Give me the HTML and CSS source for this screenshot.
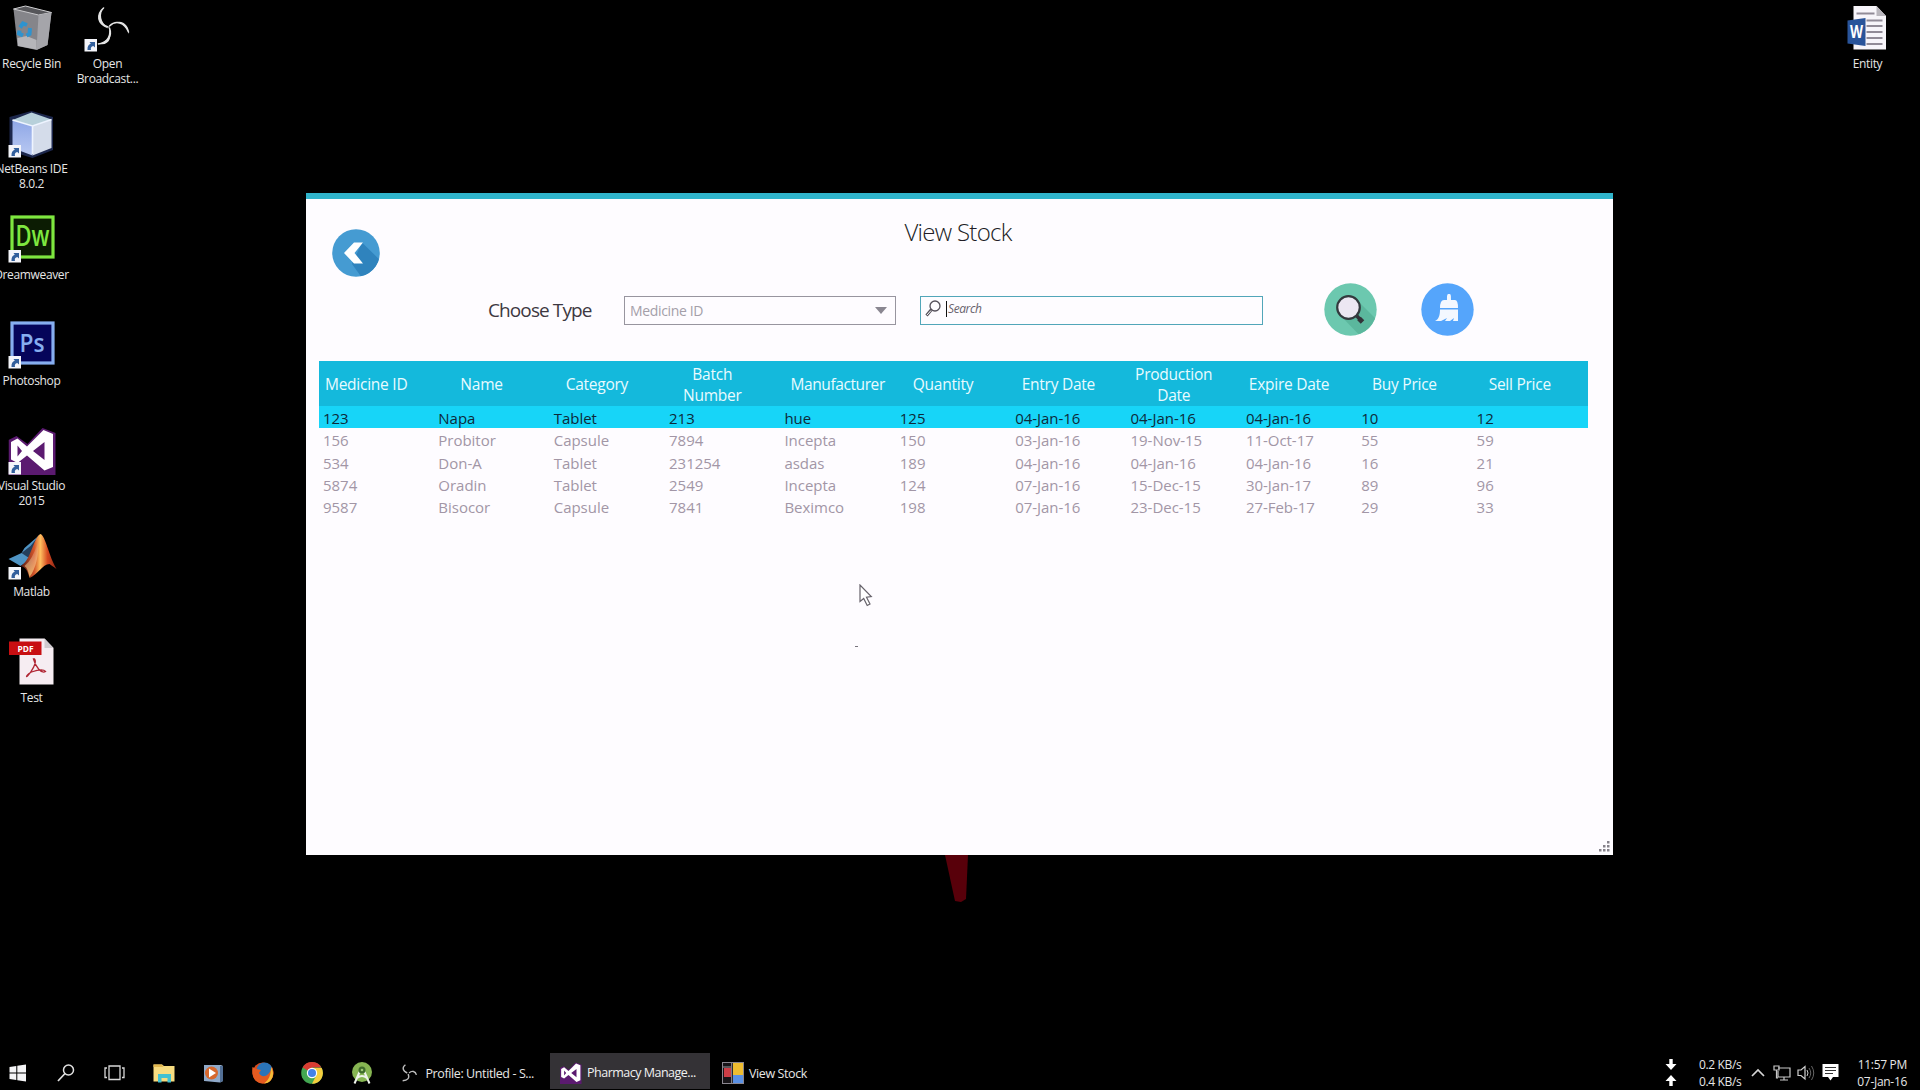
FILE: index.html
```html
<!DOCTYPE html>
<html lang="en">
<head>
<meta charset="utf-8">
<title>View Stock</title>
<link rel="stylesheet" href="styles.css">
</head>
<body>
<svg width="0" height="0" class="defs">
  <defs>
    <g id="shortcut"><rect width="12.5" height="12.5" fill="#f4f5fa"/><path d="M3 11C2.800 7.500 4 5.500 6.300 4.800L5 3H10.500V8.500L8.800 7C6.500 7.500 6 9 6.500 11Z" fill="#325f9c"/></g>
    <linearGradient id="orange" x1="0" x2="1"><stop offset="0" stop-color="#541c16"/><stop offset=".38" stop-color="#d4552a"/><stop offset=".55" stop-color="#ffc060"/><stop offset=".75" stop-color="#d64a20"/><stop offset="1" stop-color="#8a2415"/></linearGradient>
    <linearGradient id="flame" x1="0" x2="0" y1="0" y2="1"><stop offset="0" stop-color="#fff" stop-opacity="0"/><stop offset="1" stop-color="#ffd070" stop-opacity=".75"/></linearGradient>
    <linearGradient id="cube" x1="0" x2="0" y1="0" y2="1"><stop offset="0" stop-color="#8ea6e6"/><stop offset="1" stop-color="#b9c9f2"/></linearGradient>
    <symbol id="vs" viewBox="0 0 48 48"><path d="M0 13L8 9L19 17L34 1L47 6V48H0Z" fill="#5b1a70"/><path fill-rule="evenodd" d="M2.500 15L9 11.500L18.500 19.500L35 3L44.500 7V40L36 43.500L18.500 28.500L9 36L2.500 32.500ZM9 18.500V29.500L13.500 24ZM24.500 24L36 33V15Z" fill="#fff"/></symbol>
  </defs>
</svg>
<main class="desktop">
  <div class="icons">
    <div class="shortcut"><svg viewBox="-6.5 0 76 55"><path d="M13 9L25 6L51 12.500L47 45L36 50L17 46Z" fill="#85858a"/><path d="M13 9L25 6L51 12.500L38 15Z" fill="#56565a" stroke="#c9c9cc"/><path d="M38 15L51 12.500L47 45L36 50Z" fill="#a5a5aa"/><path d="M17 38L26 36L36 40V49.500L17.500 46Z" fill="#c6c6c8" opacity=".75"/><path d="M19.500 27.500L22.500 23.500L26.500 25M29.500 28L29 34L26 35.500M22.500 35.500L18.500 33.500L19 30.500" fill="none" stroke="#2e93cf" stroke-width="4"/></svg><span>Recycle Bin</span></div>
    <div class="shortcut"><svg viewBox="-6.5 0 76 55"><path d="M31 5L52.500 11V44L32 52L9 45V11Z" fill="#28386c" opacity=".7"/><path d="M12 14L32 20V49.500L12 42Z" fill="url(#cube)"/><path d="M32 20L51 13.500V42L32 49.500Z" fill="#d4dcea"/><path d="M12 14L31 6.500L51 13.500L32 20Z" fill="#b7d0da"/><path d="M12 14L32 20L51 13.500M32 20V48" fill="none" stroke="#eef4ff" stroke-width="1.600"/><use href="#shortcut" x="8" y="39"/></svg><span>NetBeans IDE<br>8.0.2</span></div>
    <div class="shortcut"><svg viewBox="-6.5 0 76 55"><rect x="11.500" y="6" width="41" height="40" fill="#0c1c03" stroke="#7ee73f" stroke-width="3.200"/><text x="15" y="35" class="logo dw" textLength="34" lengthAdjust="spacingAndGlyphs">Dw</text><use href="#shortcut" x="8" y="39"/></svg><span>Dreamweaver</span></div>
    <div class="shortcut"><svg viewBox="-6.5 0 76 55"><rect x="11.500" y="6" width="41" height="40" fill="#05055a" stroke="#86aef0" stroke-width="3.200"/><text x="19" y="35" class="logo ps" textLength="25" lengthAdjust="spacingAndGlyphs">Ps</text><use href="#shortcut" x="8" y="39"/></svg><span>Photoshop</span></div>
    <div class="shortcut"><svg viewBox="-6.5 0 76 55"><use href="#vs" x="8" y="4" width="48" height="48"/><use href="#shortcut" x="8" y="39"/></svg><span>Visual Studio<br>2015</span></div>
    <div class="shortcut"><svg viewBox="-6.5 0 76 55"><path d="M8 31L21 25L24 20L39 7L32 30L20 38Z" fill="#4f94c4"/><path d="M21 25L30 18L39 7L32 30L27 29Z" fill="#243f5c"/><path d="M20 38C30 34 33 9 40 6C45 8 48 27 56 41L49 36C42 36 37 47 29 50C27 42 25 39 20 38Z" fill="url(#orange)"/><path d="M28 34C33 28 36 18 38 14C38 26 36 40 29 49C28 44 27 40 24 38Z" fill="url(#flame)"/><use href="#shortcut" x="8" y="39"/></svg><span>Matlab</span></div>
    <div class="shortcut"><svg viewBox="-6.5 0 76 55"><path d="M19 4.500H44L53 14V50.500H19Z" fill="#f6edf2"/><path d="M44 4.500V14H53Z" fill="#cfcace"/><rect x="8.500" y="7.500" width="32.500" height="13.500" fill="#c80f12"/><text x="17" y="17.800" class="logo pdf" textLength="16" lengthAdjust="spacingAndGlyphs">PDF</text><path d="M34 25C37 28 31 38 27 42C25 44 26 40 31 38C37 36 43 35 45 37.500C41 40 35 33 33 25Z" fill="none" stroke="#b02634" stroke-width="1.300"/></svg><span>Test</span></div>
  </div>
  <div class="icons second">
    <div class="shortcut"><svg viewBox="69.500 0 76 55"><g fill="#e4e4e4"><path d="M104 7.500C96 13 94 24 108 28.500C100 22 98 14 104 7.500Z"/><path d="M108 27C113 20 124 20 128.500 34C129 24 119 16 108 27Z"/><path d="M108 26C110 34 108 42 97 43.500C108 47 113 38 108 26Z"/></g><g fill="none" stroke="#e4e4e4" stroke-width="1.500" stroke-linecap="round"><path d="M103 8C96 14 97 23 107.500 27"/><path d="M109 26C115 20 124 22 128 32"/><path d="M109 28C112 36 107 43 98 44"/></g><use href="#shortcut" x="84" y="39"/></svg><span>Open<br>Broadcast...</span></div>
  </div>
  <div class="icons last">
    <div class="shortcut"><svg viewBox="1829.500 0 76 55"><path d="M1853 6H1876L1885.500 16V49.500H1853Z" fill="#f7f5fa"/><path d="M1876 6V16H1885.500Z" fill="#b9b6bd"/><path d="M1856 13.500H1874M1866 20.500H1882M1866 26H1882M1866 32H1882M1866 38H1882M1866 44H1882" stroke="#918b97" stroke-width="1.800"/><path d="M1847 20.500L1865 18V46L1847 43.500Z" fill="#29549a"/><text x="1849.500" y="38" class="logo word" textLength="13" lengthAdjust="spacingAndGlyphs">W</text></svg><span>Entity</span></div>
  </div>

  <svg class="beak" viewBox="0 0 24 48"><path d="M0 0H23L21 44L16 47L10 46Z" fill="#58000a"/></svg>

  <section class="window">
    <header class="top">
      <svg class="back" viewBox="0 0 48 48"><clipPath id="disc"><circle cx="24" cy="24" r="23.800"/></clipPath><circle cx="24" cy="24" r="23.800" fill="#459bd2"/><path clip-path="url(#disc)" d="M30 13.500L55 38V60H38L20 35Z" fill="#2f83bd"/><path d="M31 13.500H22L12 24L22 34.500H31L22.500 24Z" fill="#fff"/></svg>
      <h1>View Stock</h1>
    </header>
    <div class="filters">
      <label>Choose Type</label>
      <div class="combo"><span>Medicine ID</span><svg viewBox="0 0 12 7"><path d="M0 0H12L6 7Z" fill="#8a8791"/></svg></div>
      <div class="search"><svg viewBox="0 0 16 17"><circle cx="10" cy="6" r="5" fill="none" stroke="#55505a" stroke-width="1.300"/><path d="M6.500 9.500L1.500 15.500" stroke="#55505a" stroke-width="3"/><path d="M6 10.500L2 15" stroke="#fff"/></svg><i class="caret"></i><em>Search</em></div>
      <svg class="find" viewBox="0 0 53 53"><clipPath id="disc2"><circle cx="26.500" cy="26.500" r="26"/></clipPath><circle cx="26.500" cy="26.500" r="26.200" fill="#6cc8af"/><path clip-path="url(#disc2)" d="M33 17L60 44V60H43L16 32Z" fill="#5bb79d"/><path d="M31 31L38 38.500" stroke="#333238" stroke-width="3.500"/><path d="M35 35.500L38.500 39" stroke="#333238" stroke-width="5"/><circle cx="24.500" cy="24.500" r="11.300" fill="#ece7f2" stroke="#333a3e" stroke-width="2.200"/></svg>
      <svg class="clear" viewBox="0 0 53 53"><circle cx="26.500" cy="26.500" r="26.200" fill="#55a5fb"/><path d="M28 11C30 11 30 12 30 17H34Q37 17 37 25H19Q19 17 23 17H26C26 12 26 11 28 11Z" fill="#f3f8ff"/><path d="M19 26.500H37V38H32L33 35L29 38H24L26 35L20 38H14C18 36 19 32 19 26.500Z" fill="#f3f8ff"/></svg>
    </div>
    <table>
      <thead><tr><th>Medicine ID</th><th>Name</th><th>Category</th><th>Batch<br>Number</th><th class="wide">Manufacturer</th><th>Quantity</th><th>Entry Date</th><th>Production<br>Date</th><th>Expire Date</th><th>Buy Price</th><th>Sell Price</th></tr></thead>
      <tbody>
        <tr class="selected"><td>123</td><td>Napa</td><td>Tablet</td><td>213</td><td>hue</td><td>125</td><td>04-Jan-16</td><td>04-Jan-16</td><td>04-Jan-16</td><td>10</td><td>12</td></tr>
        <tr><td>156</td><td>Probitor</td><td>Capsule</td><td>7894</td><td>Incepta</td><td>150</td><td>03-Jan-16</td><td>19-Nov-15</td><td>11-Oct-17</td><td>55</td><td>59</td></tr>
        <tr><td>534</td><td>Don-A</td><td>Tablet</td><td>231254</td><td>asdas</td><td>189</td><td>04-Jan-16</td><td>04-Jan-16</td><td>04-Jan-16</td><td>16</td><td>21</td></tr>
        <tr><td>5874</td><td>Oradin</td><td>Tablet</td><td>2549</td><td>Incepta</td><td>124</td><td>07-Jan-16</td><td>15-Dec-15</td><td>30-Jan-17</td><td>89</td><td>96</td></tr>
        <tr><td>9587</td><td>Bisocor</td><td>Capsule</td><td>7841</td><td>Beximco</td><td>198</td><td>07-Jan-16</td><td>23-Dec-15</td><td>27-Feb-17</td><td>29</td><td>33</td></tr>
      </tbody>
    </table>
    <svg class="grip" viewBox="0 0 12 12"><path d="M8 0h2.500v2.500h-2.500zM4 4h2.500v2.500h-2.500zM8 4h2.500v2.500h-2.500zM0 8h2.500v2.500h-2.500zM4 8h2.500v2.500h-2.500zM8 8h2.500v2.500h-2.500z" fill="#85818a"/></svg>
  </section>
  <i class="speck"></i>
  <svg class="cursor" viewBox="0 0 14 23"><path d="M1 1V17.500L4.700 14.500L8.200 21.500L11 20L7.500 13.200L12.300 12.500Z" fill="#fff" stroke="#66626a" stroke-width="1.200"/></svg>
</main>

<footer class="taskbar">
  <div class="launch">
    <svg viewBox="0 0 24 24"><path d="M4.500 6L11.300 5V11.500H4.500ZM12.300 4.800L21 3.500V11.500H12.300ZM4.500 12.500H11.300V19L4.500 18ZM12.300 12.500H21V20.500L12.300 19.200Z" fill="#f4f4f6"/></svg>
    <svg viewBox="0 0 24 24"><circle cx="14.500" cy="9" r="5" fill="none" stroke="#e2e2e2" stroke-width="1.500"/><path d="M11 12.500L4 20" stroke="#e2e2e2" stroke-width="1.700"/></svg>
    <svg viewBox="0 0 24 24"><path d="M6 5H17V18.500H6ZM4 7H2V16.500H4M19 7H21V16.500H19" fill="none" stroke="#d8d8d8" stroke-width="1.300"/></svg>
    <svg viewBox="0 0 24 24"><path d="M1.500 3.500H10L12 5H22.500V20.500H1.500Z" fill="#f7dc80"/><path d="M1.500 3.500H10L11.500 6H1.500Z" fill="#e2b850"/><path d="M6 21.500V13H19V21.500H15.500V17H9.500V21.500Z" fill="#41c1d2"/></svg>
    <svg viewBox="0 0 24 24"><path d="M2 4H19L21 5V20L18 21.500L2 20Z" fill="#90aac9"/><path d="M18 5L21 5V20L18 21.500Z" fill="#526f95"/><circle cx="9.500" cy="12" r="6.500" fill="#d7682d"/><path d="M7 7.500L14 12L7 16.500Z" fill="#fff"/></svg>
    <svg viewBox="0 0 24 24"><circle cx="12" cy="12" r="10.500" fill="#d84b1c"/><circle cx="13.500" cy="9.500" r="8" fill="#2b74b8"/><path d="M1.500 6L5.500 8L10 9L8 12C10 17 18 17 21 6C25 14 20 22.500 12 22.500C4 22.500 0 15 1.500 6Z" fill="#e45a20"/><path d="M20 6C25 14 20 22.500 13 22.500C18 19 20 14 20 6Z" fill="#f6bd38"/></svg>
    <svg viewBox="0 0 24 24"><circle cx="12" cy="12" r="10.800" fill="#43a752"/><path d="M12 12L2.600 6.500A10.800 10.800 0 0 1 21.400 6.500H12Z" fill="#d83c32"/><path d="M12 7H21.700A10.800 10.800 0 0 1 12 22.800L16.500 14Z" fill="#f5ce3e"/><circle cx="12" cy="12" r="5.200" fill="#fff"/><circle cx="12" cy="12" r="4" fill="#4381e8"/></svg>
    <svg viewBox="0 0 24 24"><circle cx="12" cy="11" r="10" fill="#86b552"/><path d="M9.500 11L4.500 22.500M14.500 11L19.500 22.500M7 17Q12 13 17 17" fill="none" stroke="#eef3ea" stroke-width="2"/><circle cx="12" cy="9" r="3.500" fill="#3f6b2c"/><circle cx="12" cy="9" r="1.300" fill="#9cc673"/></svg>
  </div>
  <div class="task obs"><svg viewBox="0 0 24 24"><g fill="none" stroke="#bdbdbd" stroke-width="1.500"><path d="M7 3C3 6 4 10 9 12"/><path d="M11 12C14 9 18 10 19 14"/><path d="M10 13C12 18 9 20 4 20.500"/></g></svg><span>Profile: Untitled - S...</span></div>
  <div class="task active"><svg><use href="#vs" width="22" height="22"/></svg><span>Pharmacy Manage...</span></div>
  <div class="task stock"><svg viewBox="0 0 22 22"><rect x=".5" y=".5" width="21" height="21" fill="#171418" stroke="#8b8790"/><rect x="11" y="1" width="10" height="12" fill="#efbd31"/><rect x="11" y="13" width="10" height="8" fill="#5b91e4"/><rect x="2" y="6" width="7" height="9" fill="#cc3d46"/><path d="M9.700 1V21M1 5H9" stroke="#9c999e"/></svg><span>View Stock</span></div>
  <div class="tray">
    <svg class="updown" viewBox="0 0 12 30"><path d="M4.300 1H7.700V6H11.500L6 12L.5 6H4.300ZM4.300 28H7.700V23H11.500L6 17L.5 23H4.300Z" fill="#fff"/></svg>
    <div class="rate">0.2 KB/s<br>0.4 KB/s</div>
    <svg class="chev" viewBox="0 0 14 9"><path d="M1 8L7 2L13 8" fill="none" stroke="#d5d5d5" stroke-width="1.700"/></svg>
    <svg class="net" viewBox="0 0 18 16"><path d="M5 3H17V12H5V6M11 12V15M7 15H15M1 1H6V5H1ZM3.500 5V13H5" fill="none" stroke="#c8c8c8" stroke-width="1.200"/></svg>
    <svg class="vol" viewBox="0 0 18 16"><path d="M1 5H4L8 1.500V14L4 10.500H1Z" fill="none" stroke="#d0d0d0" stroke-width="1.200"/><path d="M10 5Q12 8 10 11" fill="none" stroke="#c8c8c8"/><path d="M12 3Q15.500 8 12 13M14.500 1Q19 8 14.500 15" fill="none" stroke="#666"/></svg>
    <svg class="note" viewBox="0 0 17 17"><path d="M.5 0H16.500V13H11L8.500 16.500L6 13H.5Z" fill="#fff"/><path d="M3 3.500H14M3 6.500H14M3 9.500H11" stroke="#333"/></svg>
    <div class="clock">11:57 PM<br>07-Jan-16</div>
  </div>
</footer>
</body>
</html>
```
FILE: styles.css
```css
* { box-sizing: border-box; }
body {
  margin: 0;
  width: 1920px;
  height: 1090px;
  overflow: hidden;
  background: #000;
  color: #e6e6e6;
  font-family: "Open Sans", "Noto Sans", sans-serif;
  display: flex;
  flex-direction: column;
}
svg { display: block; flex: none; }
.defs { position: absolute; }
.desktop { position: relative; height: 1053px; display: flex; }
.icons { width: 76px; margin-left: -6.5px; display: grid; grid-auto-rows: 105.67px; align-content: start; }
.icons.second { margin-left: 0; }
.icons.last { margin-left: auto; margin-right: 14.5px; }
.shortcut { text-align: center; font-size: 12px; line-height: 15px; letter-spacing: -0.35px; white-space: nowrap; }
.shortcut > svg { width: 76px; height: 55px; margin-bottom: 0.7px; }
.shortcut span { display: block; }
.logo { font-weight: 600; letter-spacing: 0; }
.dw { font-size: 29px; fill: #7ee73f; }
.ps { font-size: 26px; fill: #86aef0; }
.pdf { font-size: 9px; font-weight: 700; fill: #fff; }
.word { font-size: 17px; font-weight: 700; fill: #fff; }

.beak { position: absolute; left: 945px; top: 855px; width: 24px; height: 48px; }
.speck { position: absolute; left: 855px; top: 646px; width: 3px; height: 1px; background: #77747c; }
.cursor { position: absolute; left: 859px; top: 584px; width: 14px; height: 23px; }

.window {
  position: absolute;
  left: 306px;
  top: 193px;
  width: 1307px;
  height: 662px;
  background: #fefcff;
  border-top: 6px solid #30b4cb;
  display: flex;
  flex-direction: column;
}
.top { height: 84px; display: grid; grid-template-columns: 1fr auto 1fr; align-items: start; }
.back { width: 48px; height: 48px; margin: 30px 0 0 26px; }
h1 { margin: 16px 3px 0 0; color: #211c25; font-size: 24px; line-height: 34px; font-weight: 300; letter-spacing: -0.7px; }
.filters { height: 53px; display: flex; align-items: center; }
.filters label { width: 136px; margin-left: 182px; color: #3d3841; font-size: 19px; line-height: 26px; letter-spacing: -0.9px; white-space: nowrap; }
.combo, .search { height: 29px; margin-top: 2px; border: 1px solid #98959f; display: flex; align-items: center; }
.combo { width: 272px; padding: 0 8px 0 5px; justify-content: space-between; color: #a49fa9; font-size: 14px; letter-spacing: -0.35px; }
.combo svg { width: 12px; height: 7px; }
.search { width: 343px; margin-left: 24px; padding-left: 4px; border: 1.5px solid #52a6b9; color: #69636d; font-size: 12px; }
.search svg { width: 16px; height: 17px; margin-bottom: 4px; }
.search em { margin: 0 0 4px 1px; letter-spacing: -0.4px; }
.caret { width: 1px; height: 16px; margin: 0 0 4px 5px; background: #111; }
.find, .clear { width: 53px; height: 53px; }
.find { margin-left: 61px; }
.clear { margin-left: 44px; }

table { width: 1269px; margin: 25px 0 0 13px; table-layout: fixed; border-collapse: collapse; }
th, td { overflow: visible; white-space: nowrap; }
th { height: 44.7px; padding: 3px 21px 0 0; background: #14b9dc; color: #e9fbff; font-size: 15.5px; font-weight: 400; line-height: 20.8px; letter-spacing: -0.25px; }
th.wide { padding: 3px 0 0 10px; text-align: left; letter-spacing: -0.4px; }
td { height: 22.4px; padding: 2px 0 0 4px; color: #a296a6; font-size: 15px; line-height: 20px; letter-spacing: -0.03px; }
.selected td { background: #17d5f8; color: #0d2a3a; }
.grip { width: 12px; height: 12px; margin: auto 2px 2px auto; }

.taskbar { height: 37px; display: flex; align-items: stretch; font-size: 12.5px; letter-spacing: -0.3px; }
.launch { width: 392px; margin-left: 4.5px; display: grid; grid-template-columns: repeat(8, 49.3px); align-items: center; }
.launch svg { width: 24px; height: 24px; margin-top: 3px; }
.task { display: flex; align-items: center; gap: 5px; white-space: nowrap; padding-top: 3px; }
.task svg { width: 22px; height: 22px; }
.obs { width: 153.5px; padding-left: 2px; letter-spacing: -0.4px; }
.obs svg { width: 22px; }
.active { width: 160px; height: 36px; padding-left: 10px; background: #343236; color: #f1f1f1; letter-spacing: -0.5px; }
.stock { padding-left: 12px; letter-spacing: -0.4px; }
.tray { margin-left: auto; width: 258px; display: flex; align-items: center; padding-top: 2px; line-height: 17px; }
.updown { width: 12px; height: 30px; margin-left: 3px; }
.rate { width: 44px; margin-left: 22px; font-size: 12px; letter-spacing: -0.35px; white-space: nowrap; }
.chev { width: 14px; height: 9px; margin-left: 8px; }
.net { width: 18px; height: 16px; margin-left: 8px; }
.vol { width: 18px; height: 16px; margin-left: 6px; }
.note { width: 17px; height: 17px; margin-left: 7px; }
.clock { width: 54px; margin-left: 14px; text-align: right; font-size: 12px; letter-spacing: -0.3px; white-space: nowrap; }
```
